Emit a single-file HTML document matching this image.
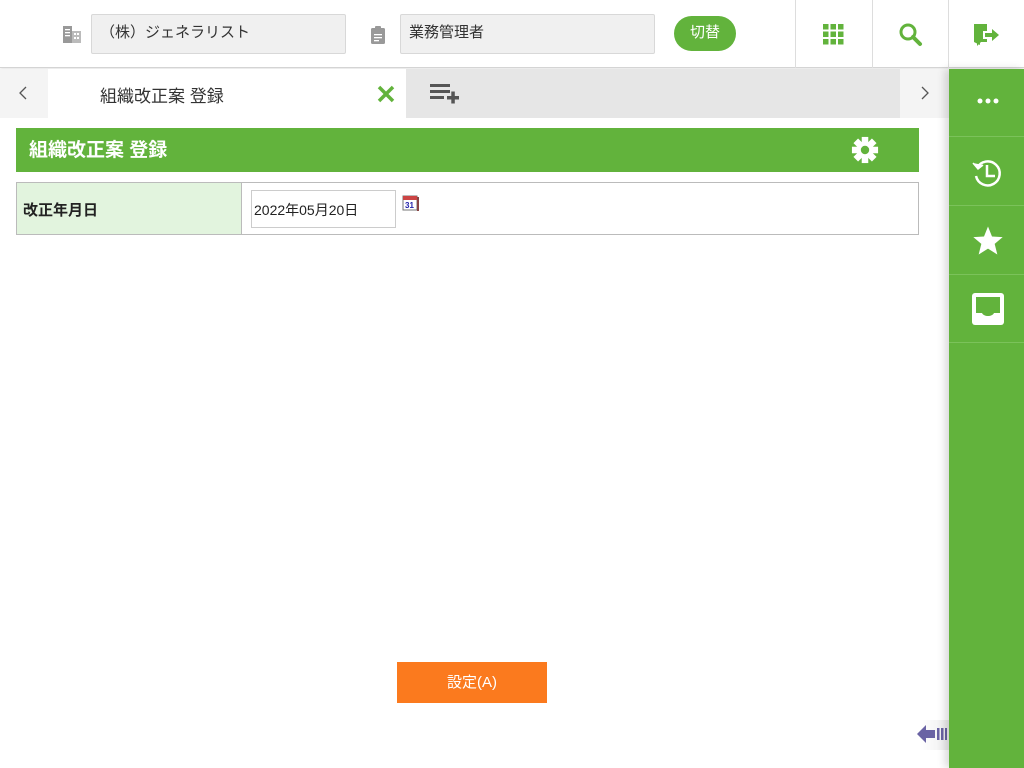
<!DOCTYPE html>
<html><head><meta charset="utf-8"><style>
*{box-sizing:border-box;margin:0;padding:0}
body{width:1024px;height:768px;overflow:hidden;background:#fff;font-family:"Liberation Sans","Noto Sans CJK JP",sans-serif;position:relative;color:#333}
.abs{position:absolute}
.hdr{left:0;top:0;width:1024px;height:68px;background:#fff;border-bottom:1px solid #d4d4d4;box-shadow:0 1px 3px rgba(0,0,0,.12)}
.inp{height:40px;top:14px;background:#f0f0f0;border:1px solid #d8d8d8;border-radius:2px;font-size:15px;line-height:36px;padding-left:8px;color:#333}
.vd{top:0;width:1px;height:68px;background:#ddd}
.side{left:949px;top:69px;width:75px;height:699px;background:#62b33c;box-shadow:-4px 0 8px rgba(0,0,0,.15)}
.sb{left:949px;width:75px;height:68px;border-bottom:1px solid #7bc25a}
</style></head><body>
<div class="abs hdr"></div>
<svg class="abs" style="left:62px;top:24px" width="20" height="20" viewBox="0 0 20 20"><rect x="1" y="2" width="9" height="17" fill="#999"/><rect x="10" y="7" width="9" height="12" fill="#bbb"/><g fill="#fff"><rect x="3" y="5" width="5" height="1.3"/><rect x="3" y="8" width="5" height="1.3"/><rect x="3" y="11" width="5" height="1.3"/><rect x="12" y="9" width="2" height="2"/><rect x="15" y="9" width="2" height="2"/><rect x="12" y="13" width="2" height="2"/><rect x="15" y="13" width="2" height="2"/></g></svg>
<div class="abs inp" style="left:91px;width:255px">（株）ジェネラリスト</div>
<svg class="abs" style="left:370px;top:25px" width="16" height="19" viewBox="0 0 16 19"><rect x="1" y="3" width="14" height="16" rx="1.5" fill="#999"/><rect x="5" y="1" width="6" height="4" rx="1" fill="#999"/><g fill="#fff"><rect x="4" y="9" width="8" height="1.3"/><rect x="4" y="12" width="8" height="1.3"/><rect x="4" y="15" width="5" height="1.3"/></g></svg>
<div class="abs inp" style="left:400px;width:255px">業務管理者</div>
<div class="abs" style="left:674px;top:16px;width:62px;height:35px;border-radius:18px;background:#62b33c;color:#fff;font-size:15px;text-align:center;line-height:33px">切替</div>
<div class="abs vd" style="left:795px"></div><div class="abs vd" style="left:872px"></div><div class="abs vd" style="left:948px"></div>
<svg class="abs" style="left:823px;top:24px" width="21" height="21" viewBox="0 0 21 21" fill="#62b33c"><rect x="0" y="0" width="5.5" height="5.5"/><rect x="7.5" y="0" width="5.5" height="5.5"/><rect x="15" y="0" width="5.5" height="5.5"/><rect x="0" y="7.5" width="5.5" height="5.5"/><rect x="7.5" y="7.5" width="5.5" height="5.5"/><rect x="15" y="7.5" width="5.5" height="5.5"/><rect x="0" y="15" width="5.5" height="5.5"/><rect x="7.5" y="15" width="5.5" height="5.5"/><rect x="15" y="15" width="5.5" height="5.5"/></svg>
<svg class="abs" style="left:898px;top:22px" width="26" height="26" viewBox="0 0 26 26"><circle cx="10" cy="10" r="7" fill="none" stroke="#62b33c" stroke-width="3"/><path d="M15 15 L22 22" stroke="#62b33c" stroke-width="4" stroke-linecap="round"/></svg>
<svg class="abs" style="left:973px;top:23px" width="28" height="24" viewBox="0 0 28 24" fill="#62b33c"><path d="M1 1 H14 V8 H10 V16 H14 V19 H8 L4 23 V5 Z"/><path d="M1 1 L7 4 V22 L1 19 Z"/><path d="M12 10 H19 V6 L26 12 L19 18 V14 H12 Z"/></svg>

<div class="abs" style="left:0;top:69px;width:48px;height:49px;background:#f4f4f4"></div>
<svg class="abs" style="left:19px;top:86px" width="8" height="14" viewBox="0 0 8 14"><path d="M7 1 L1 7 L7 13" fill="none" stroke="#555" stroke-width="1.3"/></svg>
<div class="abs" style="left:48px;top:69px;width:358px;height:49px;background:#fff"></div>
<div class="abs" style="left:100px;top:82px;font-size:17px;color:#333">組織改正案 登録</div>
<svg class="abs" style="left:377px;top:85px" width="18" height="18" viewBox="0 0 18 18"><path d="M2 2 L16 16 M16 2 L2 16" stroke="#62b33c" stroke-width="3.5"/></svg>
<div class="abs" style="left:406px;top:69px;width:494px;height:49px;background:#e6e6e6"></div>
<svg class="abs" style="left:430px;top:84px" width="30" height="20" viewBox="0 0 30 20" fill="#555"><rect x="0" y="0" width="20" height="3"/><rect x="0" y="6" width="20" height="3"/><rect x="0" y="12" width="14" height="3"/><rect x="17" y="12" width="12" height="3.5"/><rect x="21.3" y="7.5" width="3.5" height="12"/></svg>
<div class="abs" style="left:900px;top:69px;width:49px;height:49px;background:#f4f4f4"></div>
<svg class="abs" style="left:921px;top:86px" width="8" height="14" viewBox="0 0 8 14"><path d="M1 1 L7 7 L1 13" fill="none" stroke="#555" stroke-width="1.3"/></svg>

<div class="abs" style="left:16px;top:128px;width:903px;height:44px;background:#62b33c"></div>
<div class="abs" style="left:29px;top:135px;font-size:19px;font-weight:bold;color:#fff">組織改正案 登録</div>
<svg class="abs" style="left:851px;top:136px" width="28" height="28" viewBox="-15 -15 30 30"><g fill="#fff"><circle r="9"/><g id="t"><rect x="-3.5" y="-14" width="7" height="6"/></g><use href="#t" transform="rotate(45)"/><use href="#t" transform="rotate(90)"/><use href="#t" transform="rotate(135)"/><use href="#t" transform="rotate(180)"/><use href="#t" transform="rotate(225)"/><use href="#t" transform="rotate(270)"/><use href="#t" transform="rotate(315)"/></g><circle r="4.5" fill="#62b33c"/></svg>

<div class="abs" style="left:16px;top:182px;width:903px;height:53px;border:1px solid #bbb"></div>
<div class="abs" style="left:17px;top:183px;width:225px;height:51px;background:#e2f4de;border-right:1px solid #bbb"></div>
<div class="abs" style="left:23px;top:199px;font-size:15px;font-weight:bold;color:#222">改正年月日</div>
<div class="abs" style="left:251px;top:190px;width:145px;height:38px;border:1px solid #ccc;font-size:14px;line-height:38px;padding-left:2px;color:#222">2022年05月20日</div>
<svg class="abs" style="left:402px;top:194px" width="18" height="18" viewBox="0 0 18 18"><rect x="1" y="2" width="14" height="14" fill="#fff" stroke="#777"/><rect x="1" y="2" width="14" height="4" fill="#c44"/><rect x="15" y="3" width="2" height="14" fill="#844"/><text x="3" y="14" font-size="8" font-weight="bold" fill="#22a" font-family="Liberation Sans">31</text></svg>

<div class="abs" style="left:397px;top:662px;width:150px;height:41px;background:#fb7a1e;color:#fff;font-size:15px;text-align:center;line-height:41px">設定(A)</div>

<div class="abs" style="left:920px;top:720px;width:29px;height:30px;background:linear-gradient(to right,#fff,#eee)"></div>
<svg class="abs" style="left:916px;top:722px" width="32" height="24" viewBox="0 0 32 24" fill="#6a63a4"><path d="M1 12 L10 3 V8 H19 V16 H10 V21 Z"/><rect x="21" y="6" width="2.5" height="12"/><rect x="25" y="6" width="2.5" height="12"/><rect x="29" y="6" width="2" height="12"/></svg>

<div class="abs side"></div>
<div class="abs sb" style="top:69px"></div>
<div class="abs sb" style="top:138px"></div>
<div class="abs sb" style="top:207px"></div>
<div class="abs sb" style="top:275px"></div>
<svg class="abs" style="left:977px;top:97px" width="22" height="8" viewBox="0 0 22 8" fill="#fff"><circle cx="3" cy="4" r="2.5"/><circle cx="11" cy="4" r="2.5"/><circle cx="19" cy="4" r="2.5"/></svg>
<svg class="abs" style="left:970px;top:155px" width="36" height="36" viewBox="0 0 36 36" fill="none" stroke="#fff" stroke-width="2.5"><path d="M7 13 A12 12 0 1 1 6 21"/><path d="M3 8 L8 14 L13 10" fill="#fff" stroke-width="1.5"/><path d="M17 10 V21 H25"/></svg>
<svg class="abs" style="left:972px;top:225px" width="32" height="31" viewBox="0 0 24 23"><path d="M12 1 L15 8.5 L23 9 L17 14 L19 22 L12 17.6 L5 22 L7 14 L1 9 L9 8.5 Z" fill="#fff"/></svg>
<svg class="abs" style="left:972px;top:293px" width="32" height="32" viewBox="0 0 32 32"><rect x="0" y="0" width="32" height="32" rx="3" fill="#fff"/><path d="M4 4 H28 V20 H22 C20 24 12 24 10 20 H4 Z" fill="#62b33c"/></svg>
</body></html>
